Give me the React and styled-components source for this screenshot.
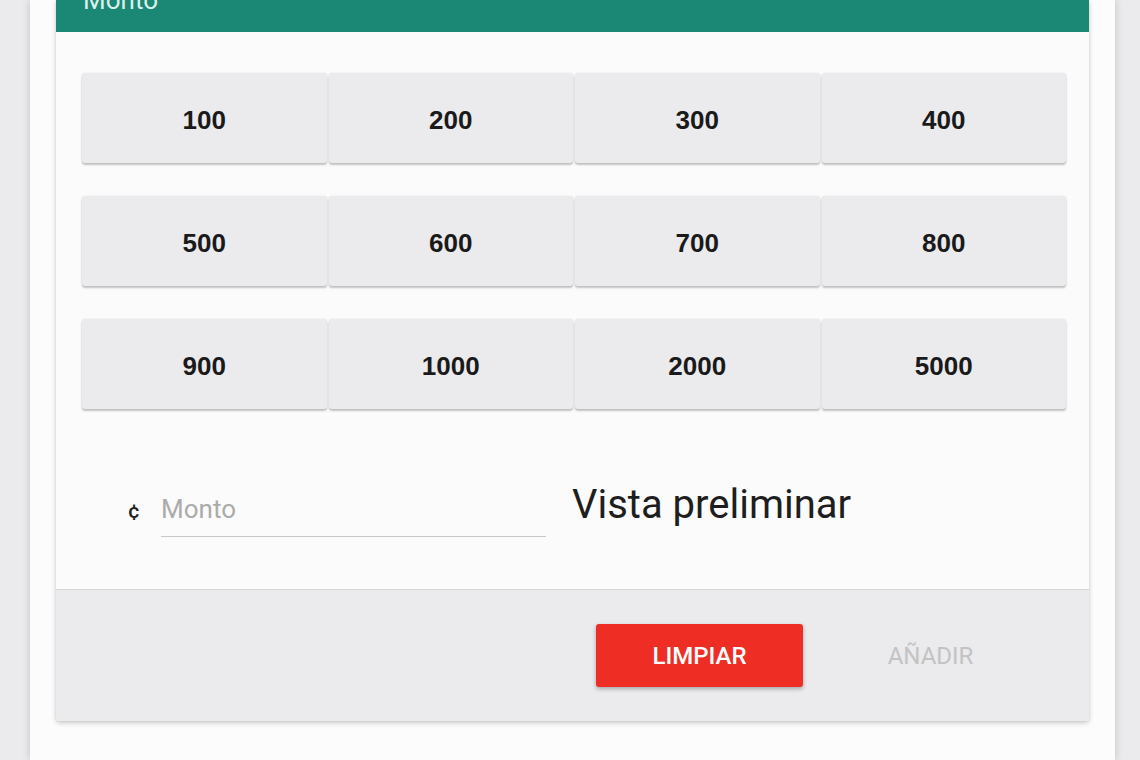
import styled, { createGlobalStyle } from 'styled-components'

const GlobalStyle = createGlobalStyle`
  html, body {
    margin: 0;
    padding: 0;
    background: #ebeaec;
    font-family: Roboto, "Liberation Sans", sans-serif;
  }
`;

const Page = styled.div`
  /* the white sheet the card sits on */
  margin-left: 30px;
  width: 1085px;
  height: 760px;
  background: #fcfcfc;
  box-shadow: 0 0 8px rgba(0, 0, 0, 0.18);
  overflow: hidden;
`;

const Card = styled.div`
  margin-left: 26px;
  width: 1033px;
  background: #fbfbfb;
  box-shadow: 0 2px 5px rgba(0, 0, 0, 0.2), 0 0 2px rgba(0, 0, 0, 0.08);
  border-radius: 0 0 3px 3px;
  overflow: hidden;
`;

const Header = styled.div`
  height: 32px;
  box-sizing: border-box;
  display: flex;
  align-items: flex-end;
  padding: 0 0 19px 27px;
  background: #1b8775;
  color: #d9efeb;
  font-size: 26px;
  line-height: 26px;
  overflow: hidden;
`;

const Body = styled.div`
  padding: 41px 23px 52px 26px;
`;

const Grid = styled.div`
  display: grid;
  grid-template-columns: repeat(4, 1fr);
  column-gap: 2px;
  row-gap: 33px;
`;

const AmountButton = styled.button`
  height: 90px;
  padding: 4px 0 0;
  border: 0;
  border-radius: 3px;
  background: #ebeaec;
  color: #1a1a1a;
  font-family: "Liberation Sans", Arial, sans-serif;
  font-weight: bold;
  font-size: 26px;
  box-shadow: 0 2px 2px rgba(0, 0, 0, 0.22), 0 0 2px rgba(0, 0, 0, 0.1);
  cursor: pointer;
`;

const InputRow = styled.div`
  display: flex;
  align-items: baseline;
  margin-top: 72px;
  padding-left: 46px;
`;

const Currency = styled.span`
  width: 33px;
  font-size: 21px;
  font-weight: 500;
  color: #222;
`;

const Field = styled.input`
  width: 385px;
  height: 36px;
  padding: 0 0 9px 0;
  border: 0;
  border-bottom: 1px solid #c9c9c9;
  background: transparent;
  font-family: Roboto, sans-serif;
  font-size: 26px;
  color: #222;
  outline: none;

  &::placeholder {
    color: #ababab;
  }
`;

const Preview = styled.div`
  margin-left: 26px;
  font-size: 40px;
  color: #1e1e1e;
`;

const Footer = styled.div`
  height: 132px;
  box-sizing: border-box;
  border-top: 1px solid #d6d6d6;
  background: #ebeaec;
  display: flex;
  align-items: center;
  justify-content: flex-end;
  gap: 24px;
  padding-right: 55px;
`;

const ActionButton = styled.button`
  width: 207px;
  height: 63px;
  border: 0;
  border-radius: 3px;
  font-family: Roboto, sans-serif;
  font-size: 24px;
  text-transform: uppercase;
  cursor: pointer;
  background: ${p => (p.$primary ? '#ee2e24' : 'transparent')};
  color: ${p => (p.$primary ? '#fff' : '#c3c3c3')};
  font-weight: ${p => (p.$primary ? 500 : 400)};
  box-shadow: ${p => (p.$primary ? '0 2px 4px rgba(0,0,0,0.3)' : 'none')};
`;

const amounts = [100, 200, 300, 400, 500, 600, 700, 800, 900, 1000, 2000, 5000];

const App = () => {
  return (
    <>
      <GlobalStyle />
      <Page>
        <Card>
          <Header>Monto</Header>
          <Body>
            <Grid>
              {amounts.map(a => (
                <AmountButton key={a}>{a}</AmountButton>
              ))}
            </Grid>
            <InputRow>
              <Currency>¢</Currency>
              <Field placeholder="Monto" />
              <Preview>Vista preliminar</Preview>
            </InputRow>
          </Body>
          <Footer>
            <ActionButton $primary>Limpiar</ActionButton>
            <ActionButton>Añadir</ActionButton>
          </Footer>
        </Card>
      </Page>
    </>
  )
}

export default App;
